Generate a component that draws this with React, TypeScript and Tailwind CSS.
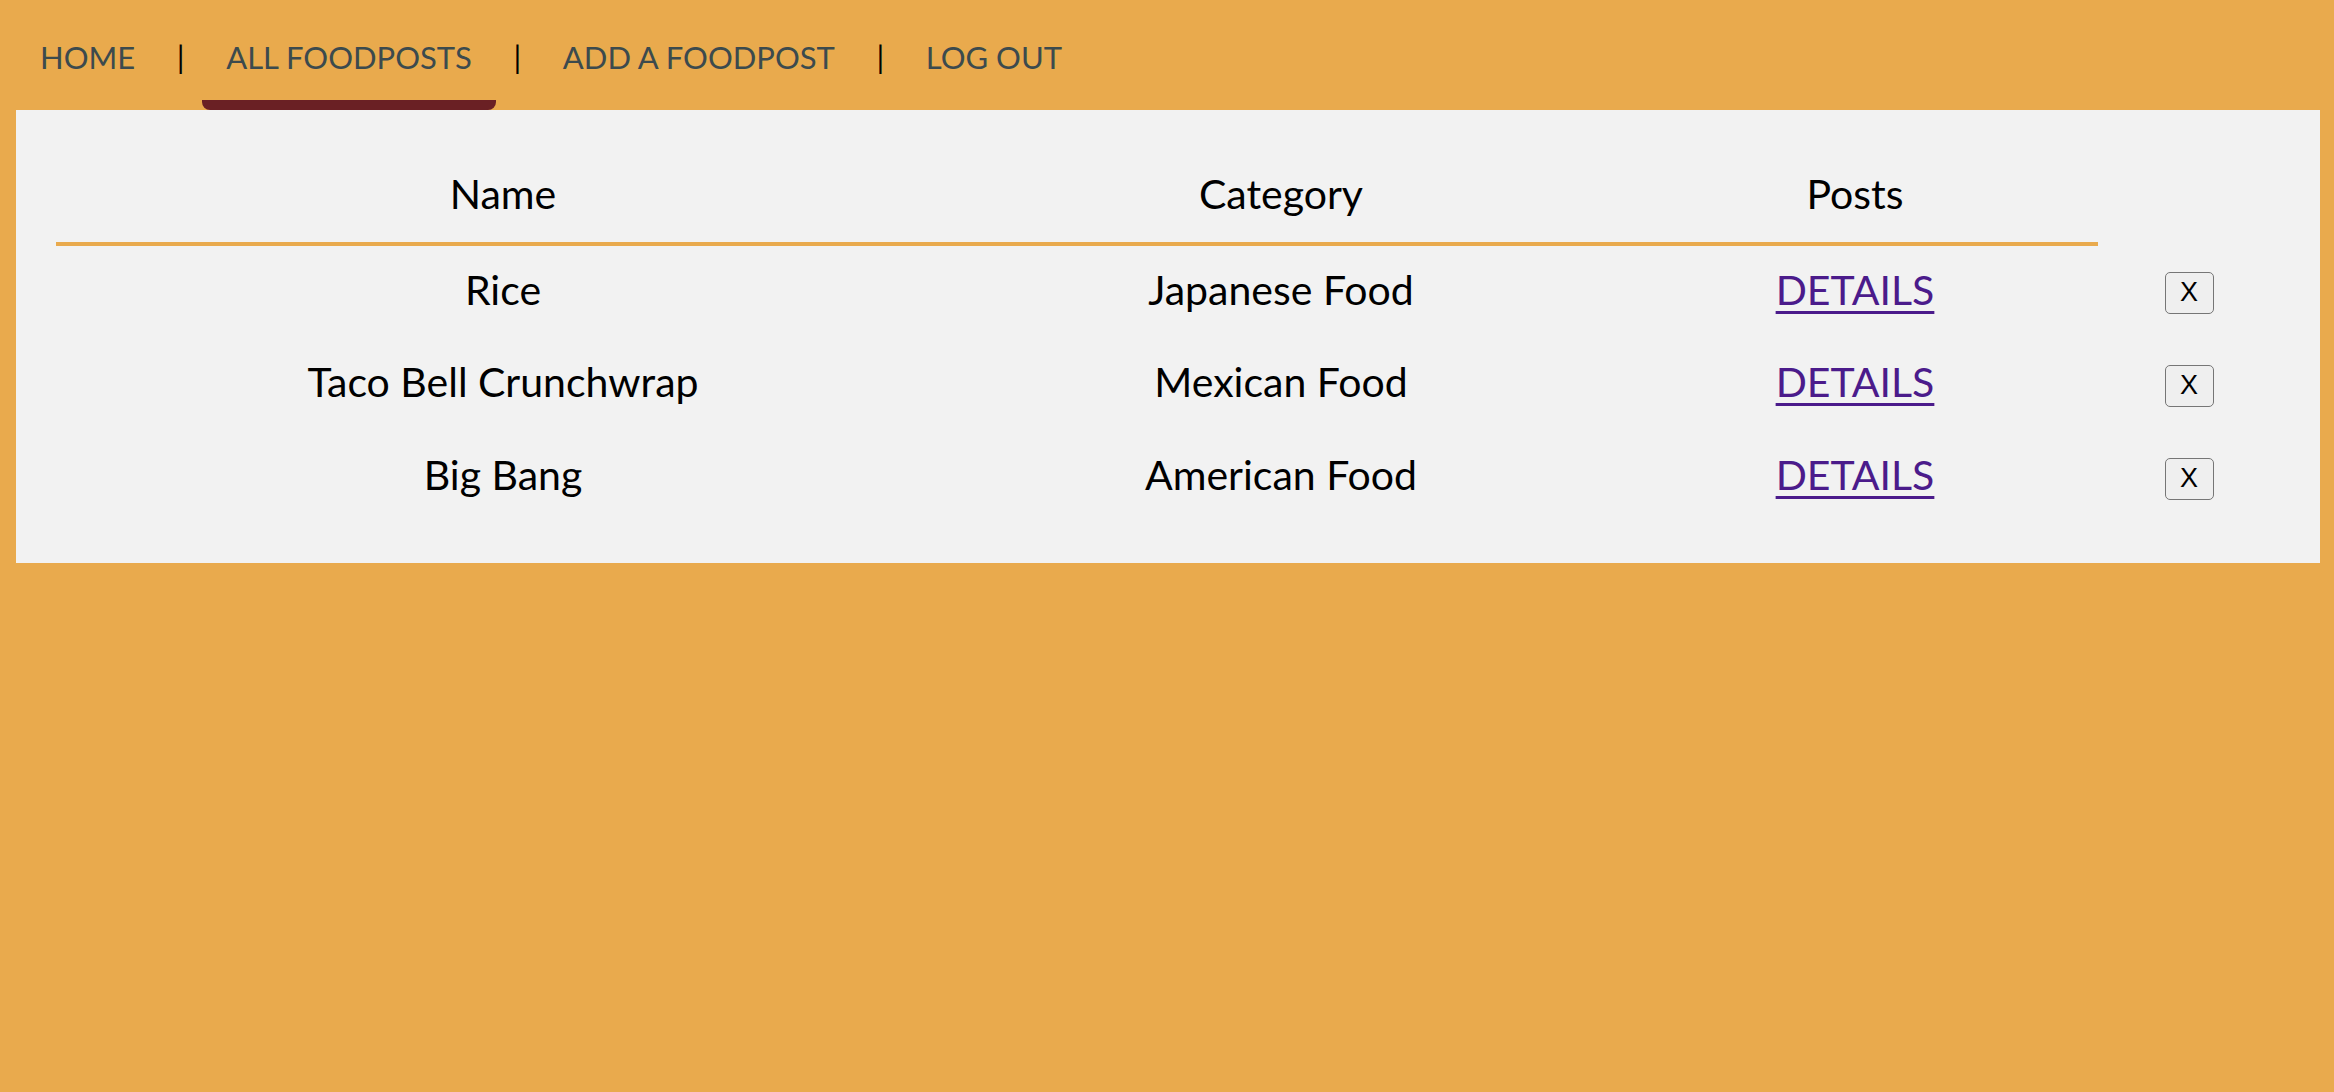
import { Fragment } from 'react'

const links = [
    { label: 'HOME', active: false },
    { label: 'ALL FOODPOSTS', active: true },
    { label: 'ADD A FOODPOST', active: false },
    { label: 'LOG OUT', active: false },
]

const foodposts = [
    { name: 'Rice', category: 'Japanese Food' },
    { name: 'Taco Bell Crunchwrap', category: 'Mexican Food' },
    { name: 'Big Bang', category: 'American Food' },
]

function Nav() {
    return (
        <nav className="flex h-[110px] pl-4 items-stretch">
            {links.map((link, i) => (
                <Fragment key={link.label}>
                    {i > 0 && (
                        <span className="w-[43px] flex items-center justify-center text-black text-[31px] pt-1">|</span>
                    )}
                    <a href="#" className="relative flex items-center px-6 pt-1 text-[31px] text-[#3c4a4d] no-underline">
                        {link.label}
                        {/* active tab marker */}
                        {link.active && (
                            <span className="absolute bottom-0 left-0 right-0 h-[10px] rounded-b-lg bg-[#6a2024]"></span>
                        )}
                    </a>
                </Fragment>
            ))}
        </nav>
    )
}

export default function App() {
    return (
        <div className="min-h-[1092px] bg-[#e9aa4d] pb-10 font-['Lato',sans-serif]">
            <Nav />

            <main className="ml-4 mr-[14px] bg-[#f2f2f2] p-10">
                <table className="w-full table-fixed border-collapse text-[41px] text-black">
                    <colgroup>
                        <col className="w-[894px]" />
                        <col className="w-[662px]" />
                        <col className="w-[486px]" />
                        <col />
                    </colgroup>
                    <thead>
                        <tr className="h-[94px]">
                            <th className="font-normal border-b-4 border-[#e9aa4d] pb-1">Name</th>
                            <th className="font-normal border-b-4 border-[#e9aa4d] pb-1">Category</th>
                            <th className="font-normal border-b-4 border-[#e9aa4d] pb-1">Posts</th>
                            <th></th>
                        </tr>
                    </thead>
                    <tbody>
                        {foodposts.map((post) => (
                            <tr key={post.name} className="h-[93px]">
                                <td className="text-center pb-1">{post.name}</td>
                                <td className="text-center pb-1">{post.category}</td>
                                <td className="text-center pb-1">
                                    <a href="#" className="text-[#4b1b8b] underline decoration-[3px] underline-offset-[6px]">
                                        DETAILS
                                    </a>
                                </td>
                                <td>
                                    <button className="mx-auto mt-1 w-[49px] h-[42px] flex items-center justify-center border-[1.5px] border-[#767676] rounded-[5px] bg-[#efefef] font-['Liberation_Sans',sans-serif] text-[27px] leading-none text-black">
                                        X
                                    </button>
                                </td>
                            </tr>
                        ))}
                    </tbody>
                </table>
            </main>
        </div>
    )
}
